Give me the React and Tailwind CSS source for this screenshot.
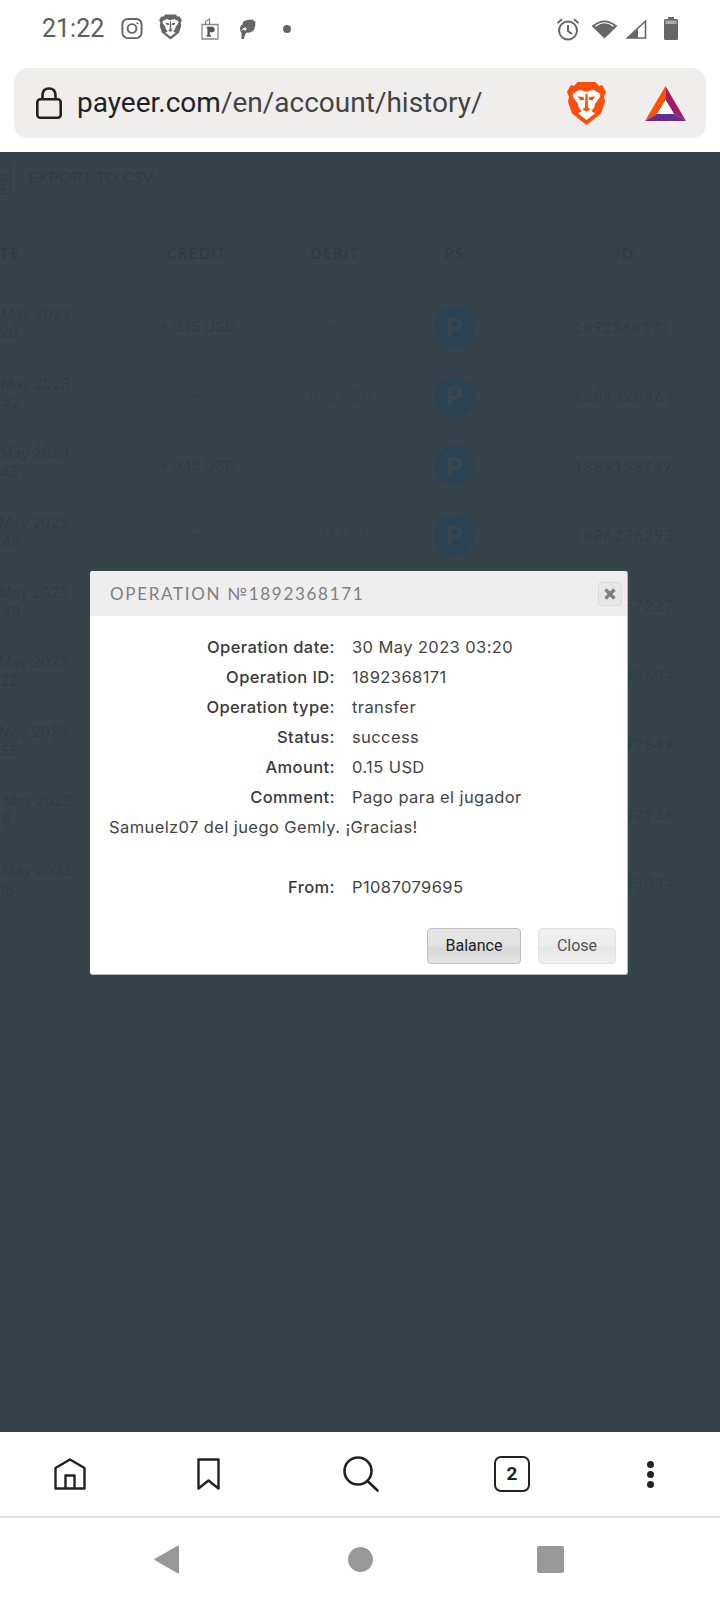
import React from "react";

const rows = [
  { top: "ml-px", bottom: "", time: "20", credit: "+ 0.15 USD", debit: "--", ps: true, id: "1892368171", idClass: "pr-[74px] tracking-[0.07em]" },
  { top: "ml-px", bottom: "ml-[2px]", time: "42", credit: "--", debit: "- 0.15 USD", ps: true, id: "1889220464", idClass: "pr-[70px] tracking-[0.1em]" },
  { top: "", bottom: "", time: "43", credit: "+ 0.15 USD", debit: "--", ps: true, id: "1889153749", idClass: "pr-[72px] tracking-[0.08em]" },
  { top: "-ml-px", bottom: "ml-[2px]", time: "48", credit: "--", debit: "- 0.15 USD", ps: true, id: "1886236293", idClass: "pr-[70px] tracking-[0.1em]" },
  { top: "-ml-px", bottom: "ml-[2px]", time: "49", id: "57227", idClass: "pr-[70px] tracking-[0.1em]" },
  { top: "-ml-px", bottom: "", time: "22", id: "33684", idClass: "pr-[70px] tracking-[0.1em]" },
  { top: "-ml-px", bottom: "", time: "55", id: "97849", idClass: "pr-[70px] tracking-[0.1em]" },
  { top: "ml-[3px]", bottom: "ml-[2px]", time: "8", id: "02936", idClass: "pr-[70px] tracking-[0.1em]" },
  { top: "ml-[2px]", bottom: "-ml-px", time: "16", id: "65034", idClass: "pr-[70px] tracking-[0.1em]" },
];

const details = [
  ["Operation date:", "30 May 2023 03:20"],
  ["Operation ID:", "1892368171"],
  ["Operation type:", "transfer"],
  ["Status:", "success"],
  ["Amount:", "0.15 USD"],
];

const LionShield = ({ className, shield, face, detail }) => (
  <svg viewBox="0 0 40 46" className={className}>
    <path fill={shield} d="M11 1 29 1 33 5 36 4 40 11 38 16 39 21 35 33 24 42 20 45 16 42 5 33 1 21 2 16 0 11 4 4 7 5Z" />
    <path fill={face} d="M6 13 13 9 20 11 27 9 34 13 34 16 29 23 28 27 25 31 29 33 20 40 11 33 15 31 12 27 11 23 6 16Z" />
    <path fill={detail} d="M11 15.500 17 16.500 18 19 14 20ZM29 15.500 23 16.500 22 19 26 20ZM19 13 21 13 21.500 27 24 29 20 31.500 16 29 18.500 27Z" />
  </svg>
);

const StatusIcons = () => (
  <>
    <svg viewBox="0 0 24 24" className="w-[24px] h-[23px] ml-[16px]" fill="none" stroke="#666" strokeWidth="2">
      <rect x="2" y="2" width="20" height="20" rx="5.500" />
      <circle cx="12" cy="12" r="4.600" />
      <circle cx="17.600" cy="6.400" r="1" fill="#666" stroke="none" />
    </svg>
    <LionShield className="w-[23px] h-[26px] ml-[15px] -mt-[3px]" shield="#666" face="#fff" detail="#666" />
    <svg viewBox="0 0 18 22" className="w-[18px] h-[22px] ml-[19px]" fill="none" stroke="#888" strokeWidth="1.300">
      <path d="M1 6.500H17V21H1ZM4.500 6V3.500L8.500 1V6" />
      <path d="M6 9H11.500Q13.500 9 13.500 11.500T11.500 14H8.500V17H9.500V18.500H6V17H6.800V10.400H6Z" fill="#555" stroke="#555" strokeWidth=".6" />
    </svg>
    <svg viewBox="0 0 16 20" className="w-[16px] h-[20px] ml-[21px]">
      <path fill="#666" d="M4 2Q8 0 13 .5 13 2 15.500 2.500 15.500 8 14 11 11 14.500 7 13.500 5 14 4 20L1.500 20 1.500 14Q-.5 12 .2 8 1 6 2.500 5.500Q2.500 3 4 2Z" />
      <circle cx="5" cy="10" r="1.500" fill="#fff" />
      <path d="M1.500 11.500Q3 9 6 9" stroke="#fff" strokeWidth="1" fill="none" />
    </svg>
    <div className="w-[8px] h-[8px] rounded-full bg-[#666] ml-[27px]" />
  </>
);

const StatusRight = () => (
  <div className="flex items-center ml-auto mr-[42px]">
    <svg viewBox="0 0 24 24" className="w-[24px] h-[24px]" fill="none" stroke="#666" strokeWidth="2">
      <circle cx="12" cy="13.500" r="9" />
      <path d="M12 8V14L16 17M1.500 6 6 2.200M22.500 6 18 2.200" />
    </svg>
    <svg viewBox="0 0 27 22" className="w-[27px] h-[21px] ml-[11px]">
      <path fill="#666" d="M13.500 21.500 0 8.500Q13.500-3.500 27 8.500Z" />
      <path fill="#fff" d="M3.500 8.300Q13.500.4 23.500 8.300L22.500 9.200Q13.500 2 4.500 9.200Z" />
    </svg>
    <svg viewBox="0 0 22 20" className="w-[22px] h-[20px] ml-[7px]">
      <path d="M20.500 2V19H2.500Z" fill="none" stroke="#666" strokeWidth="1.600" />
      <path d="M13 10V19H2.500Z" fill="#666" />
    </svg>
    <svg viewBox="0 0 14 23" className="w-[14px] h-[23px] ml-[17px]">
      <path fill="#666" d="M4 0H10V2H12.500Q14 2 14 3.500V21.500Q14 23 12.500 23H1.500Q0 23 0 21.500V3.500Q0 2 1.500 2H4Z" />
      <rect x="1.500" y="3.500" width="11" height="3.500" fill="#aaa" />
    </svg>
  </div>
);

const App = () => {
  return (
    <div className="w-[720px] h-[1600px] flex flex-col bg-white overflow-hidden [font-family:Inter,sans-serif]">
      <div className="h-[152px] shrink-0 flex flex-col">
        <div className="h-[68px] flex items-center pl-[42px] pb-[11px]">
          <span className="[font-family:Roboto,sans-serif] text-[25px] leading-none text-[#5c5c5c]">21:22</span>
          <StatusIcons />
          <StatusRight />
        </div>
        <div className="h-[70px] mx-[14px] bg-[#f0eded] rounded-[14px] flex items-center pl-[22px] pr-[20px]">
          <svg viewBox="0 0 26 32" className="w-[26px] h-[32px] shrink-0" fill="none" stroke="#222" strokeWidth="2.600">
            <rect x="1.300" y="12.300" width="23.400" height="18.400" rx="3" />
            <path d="M6.500 12V8.500Q6.500 1.500 13 1.500T19.500 8.500V12" />
          </svg>
          <div className="ml-[15px] [font-family:Roboto,sans-serif] text-[28px] leading-none whitespace-nowrap text-[#444]">
            <span className="text-[#222]">payeer.com</span>/en/account/history/
          </div>
          <LionShield className="w-[39px] h-[45px] ml-auto" shield="#fb4e0a" face="#fff" detail="#fb4e0a" />
          <svg viewBox="0 0 41 35" className="w-[41px] h-[35px] ml-[39px]">
            <polygon fill="#ff5000" points="20.500,0 0,35 12,28 20.500,14" />
            <polygon fill="#9e1f63" points="20.500,0 41,35 29,28 20.500,14" />
            <polygon fill="#662d91" points="0,35 41,35 29,28 12,28" />
            <polygon fill="#fff" points="20.500,14 12,28 29,28" />
          </svg>
        </div>
      </div>

      <div className="relative h-[1280px] shrink-0 bg-[#37434b] overflow-hidden">
        <div className="h-[50px] flex items-center">
          <svg viewBox="0 0 11 34" className="w-[11px] h-[34px] mt-[1px]" fill="none" stroke="#2f3b43" strokeWidth="1">
            <path d="M0 1H4L10 7V33H0M0 14H6M0 19H6M0 24H6M0 28H6" />
          </svg>
          <span className="ml-[17px] [font-family:Lato,sans-serif] text-[16px] tracking-[0.03em] leading-[24px] text-[#2f3b43] border-b border-[#35414a]">EXPORT TO CSV</span>
        </div>

        <div className="mt-[37px] h-[28px] grid grid-cols-[127px_140px_136px_102px_240px] items-center [font-family:Lato,sans-serif] font-bold text-[15px] tracking-[0.08em] text-[#2f3b43]">
          <span>TE</span>
          <span className="text-center">CREDIT</span>
          <span className="text-center">DEBIT</span>
          <span className="text-center">PS</span>
          <span className="text-center">ID</span>
        </div>

        <div className="mt-[25px]">
          {rows.map((row, index) => (
            <div key={index} className="h-[69.6px] grid grid-cols-[127px_140px_136px_102px_240px] items-center text-[15px] text-[#303c44]">
              <div className="text-[14.5px] leading-[19px] pb-[7px] whitespace-nowrap">
                <div className={row.top}>May 2023</div>
                <div className={row.bottom}>{row.time}</div>
              </div>
              <div className="text-center text-[#2f3c44]">{row.credit}</div>
              <div className="text-center text-[#333f48]">{row.debit}</div>
              <div className="flex justify-center">
                {row.ps && (
                  <div className="w-[41px] h-[41px] rounded-full bg-[#2a4252] flex items-center justify-center [font-family:Lato,sans-serif] font-black text-[27px] text-[#3a464e]">P</div>
                )}
              </div>
              <div className={`text-right [font-family:Lato,sans-serif] text-[#303c44] ${row.idClass}`}>{row.id}</div>
            </div>
          ))}
        </div>

        <div className="absolute left-[90px] top-[419px] w-[538px] h-[404px] bg-white rounded-[3px] border-r border-b border-[#b4b8ba] overflow-hidden">
          <div className="h-[45px] bg-[#eeeeee] flex items-center pl-[20px] pr-[5px]">
            <span className="[font-family:Lato,sans-serif] text-[17px] tracking-[0.1em] text-[#808080]">OPERATION №1892368171</span>
            <button className="ml-auto w-[24px] h-[24px] rounded-[3px] border border-[#dcdcdc] bg-[#e8e8e8] flex items-center justify-center">
              <svg viewBox="0 0 12 12" className="w-[12px] h-[12px]" stroke="#808080" strokeWidth="3.400">
                <path d="M1.500 1.500 10.500 10.500M10.500 1.500 1.500 10.500" />
              </svg>
            </button>
          </div>
          <div className="pt-[16px] pl-[19px] pr-[24px] text-[16.5px] tracking-[0.4px] leading-[30px] text-[#444]">
            {details.map(([label, value]) => (
              <div key={label}>
                <span className="inline-block w-[226px] text-right mr-[17px] font-medium text-[#3a3a3a]">{label}</span>
                {value}
              </div>
            ))}
            <div className="mb-[30px]">
              <span className="inline-block w-[226px] text-right mr-[17px] font-medium text-[#3a3a3a]">Comment:</span>
              Pago para el jugador Samuelz07 del juego Gemly. ¡Gracias!
            </div>
            <div>
              <span className="inline-block w-[226px] text-right mr-[17px] font-medium text-[#3a3a3a]">From:</span>
              P1087079695
            </div>
          </div>
          <div className="flex justify-end gap-[17px] mt-[26px] pr-[11px] [font-family:Roboto,sans-serif] text-[16px]">
            <button className="w-[94px] h-[36px] rounded-[4px] border border-[#bdbdbd] text-[#222] bg-[linear-gradient(#e6e6e6_0%,#e2e2e2_50%,#d8d8d8_55%,#e4e4e4_100%)]">Balance</button>
            <button className="w-[78px] h-[36px] rounded-[4px] border border-[#e2e2e2] text-[#555] bg-[linear-gradient(#f0f0f0_0%,#ececec_50%,#e6e6e6_55%,#f0f0f0_100%)]">Close</button>
          </div>
        </div>
      </div>

      <div className="h-[86px] shrink-0 border-b-2 border-[#e0e0e0] grid grid-cols-[139px_138px_166px_138px_139px] items-center">
        <div className="flex justify-center">
          <svg viewBox="0 0 32 32" className="w-[32px] h-[32px]" fill="none" stroke="#222" strokeWidth="2.400" strokeLinejoin="round">
            <path d="M16 1.500 30.500 10V30.500H1.500V10Z" />
            <path d="M11.500 30V17.500H20.500V30" />
          </svg>
        </div>
        <div className="flex justify-center">
          <svg viewBox="0 0 23 32" className="w-[23px] h-[32px]" fill="none" stroke="#222" strokeWidth="2.400" strokeLinejoin="round">
            <path d="M1.500 1.500H21.500V30.500L11.500 22.500 1.500 30.500Z" />
          </svg>
        </div>
        <div className="flex justify-center">
          <svg viewBox="0 0 36 36" className="w-[36px] h-[36px] ml-px" fill="none" stroke="#222" strokeWidth="2.600" strokeLinecap="round">
            <circle cx="15" cy="15" r="13.500" />
            <path d="M24.500 25 34.500 34.500" />
          </svg>
        </div>
        <div className="flex justify-center">
          <div className="w-[36px] h-[36px] rounded-[7px] border-[2.5px] border-[#222] flex items-center justify-center [font-family:Roboto,sans-serif] font-bold text-[19px] text-[#222]">2</div>
        </div>
        <div className="flex flex-col items-center gap-[3px]">
          <div className="w-[7px] h-[7px] rounded-full bg-[#222]" />
          <div className="w-[7px] h-[7px] rounded-full bg-[#222]" />
          <div className="w-[7px] h-[7px] rounded-full bg-[#222]" />
        </div>
      </div>

      <div className="flex-1 flex items-center">
        <div className="w-[154px]" />
        <svg viewBox="0 0 25 29" className="w-[25px] h-[29px]">
          <path fill="#989898" d="M24 0.500Q25 0.500 25 1.500V27.500Q25 28.500 24 28.500L0.500 15Q0 14.500 0.500 14Z" />
        </svg>
        <div className="w-[25px] h-[25px] rounded-full bg-[#989898] ml-[169px]" />
        <div className="w-[27px] h-[27px] rounded-[2px] bg-[#989898] ml-[164px]" />
      </div>
    </div>
  );
};

export default App;
